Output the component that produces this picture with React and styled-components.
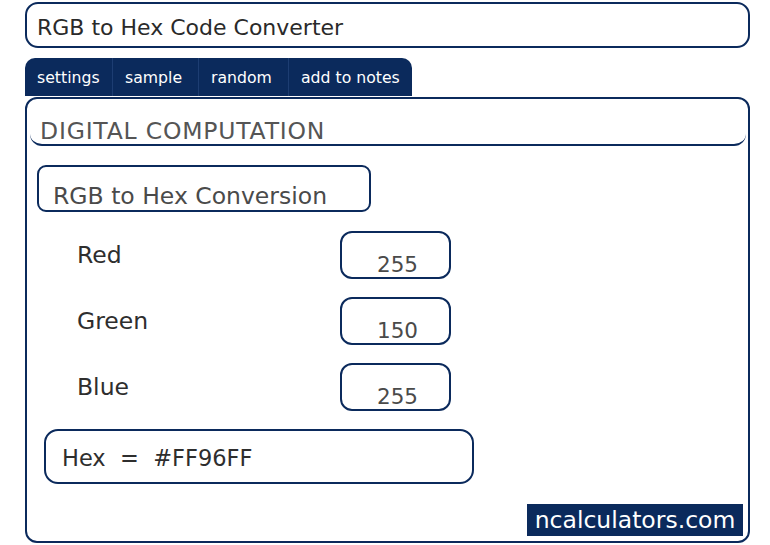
import React from "react";
import styled, { createGlobalStyle } from "styled-components";

const navy = "#0b2a5c";

const GlobalStyle = createGlobalStyle`
  html, body {
    margin: 0;
    padding: 0;
    background: #ffffff;
    font-family: "DejaVu Sans", "Open Sans", sans-serif;
  }
`;

const Page = styled.div`
  width: 770px;
  height: 545px;
  box-sizing: border-box;
  padding: 2px 20px 2px 25px;
  display: flex;
  flex-direction: column;
`;

const TitleBox = styled.div`
  height: 46px;
  box-sizing: border-box;
  border: 2px solid ${navy};
  border-radius: 13px;
  display: flex;
  align-items: center;
  padding: 4px 0 0 10px;
  font-size: 22px;
  color: #2a2a2a;
`;

const TabBar = styled.div`
  margin-top: 10px;
  align-self: flex-start;
  display: flex;
  height: 38px;
  background: ${navy};
  border-radius: 10px 10px 0 0;
  overflow: hidden;
`;

const Tab = styled.div`
  width: ${(p) => p.w}px;
  box-sizing: border-box;
  padding-left: 12px;
  display: flex;
  align-items: center;
  color: #ffffff;
  font-size: 15.7px;
  border-left: ${(p) => (p.first ? "none" : "1px solid #1d3d72")};
`;

const Panel = styled.div`
  flex: 1;
  margin-top: 1px;
  border: 2px solid ${navy};
  border-radius: 12px;
  display: flex;
  flex-direction: column;
`;

const SectionHead = styled.div`
  margin: 0 2px 0 3px;
  height: 47px;
  box-sizing: border-box;
  border-bottom: 2px solid ${navy};
  border-radius: 0 0 12px 12px;
  display: flex;
  align-items: flex-end;
  padding: 0 0 1px 10px;
  font-size: 23.5px;
  line-height: 1;
  letter-spacing: 0.8px;
  color: #555555;
`;

const SubBox = styled.div`
  margin: 19px 0 0 10px;
  width: 334px;
  height: 47px;
  box-sizing: border-box;
  border: 2px solid ${navy};
  border-radius: 9px;
  display: flex;
  align-items: flex-end;
  padding: 0 0 2px 14px;
  font-size: 23.5px;
  line-height: 1;
  color: #4a4a4a;
`;

const Rows = styled.div`
  margin: 19px 0 0 50px;
  display: flex;
  flex-direction: column;
  gap: 18px;
`;

const Row = styled.div`
  display: grid;
  grid-template-columns: 263px 111px;
  align-items: center;
`;

const Label = styled.div`
  font-size: 23.5px;
  color: #2e2e2e;
`;

const ValueBox = styled.div`
  height: 48px;
  box-sizing: border-box;
  border: 2px solid ${navy};
  border-radius: 12px;
  display: flex;
  align-items: flex-end;
  justify-content: center;
  padding: 0 0 0 4px;
  font-size: 21.5px;
  line-height: 1.1;
  color: #4a4a4a;
`;

const ResultBox = styled.div`
  margin: 18px 0 0 17px;
  width: 430px;
  height: 55px;
  box-sizing: border-box;
  border: 2px solid ${navy};
  border-radius: 14px;
  display: flex;
  align-items: center;
  padding: 2px 0 0 16px;
  font-size: 22.5px;
  color: #2e2e2e;
  white-space: pre;
`;

const Logo = styled.div`
  margin: auto 5px 5px auto;
  width: 216px;
  height: 32px;
  background: ${navy};
  color: #ffffff;
  display: flex;
  align-items: center;
  justify-content: center;
  font-size: 23.5px;
`;

const tabs = [
  { name: "settings", w: 87 },
  { name: "sample", w: 86 },
  { name: "random", w: 90 },
  { name: "add to notes", w: 124 },
];

const values = [
  { label: "Red", value: 255 },
  { label: "Green", value: 150 },
  { label: "Blue", value: 255 },
];

const toHex = (n) => n.toString(16).toUpperCase().padStart(2, "0");

export default function App() {
  const hex = "#" + values.map((v) => toHex(v.value)).join("");
  return (
    <>
      <GlobalStyle />
      <Page>
        <TitleBox>RGB to Hex Code Converter</TitleBox>
        <TabBar>
          {tabs.map((t, i) => (
            <Tab key={t.name} w={t.w} first={i === 0}>
              {t.name}
            </Tab>
          ))}
        </TabBar>
        <Panel>
          <SectionHead>DIGITAL COMPUTATION</SectionHead>
          <SubBox>RGB to Hex Conversion</SubBox>
          <Rows>
            {values.map((v) => (
              <Row key={v.label}>
                <Label>{v.label}</Label>
                <ValueBox>{v.value}</ValueBox>
              </Row>
            ))}
          </Rows>
          <ResultBox>{"Hex  =  " + hex}</ResultBox>
          <Logo>ncalculators.com</Logo>
        </Panel>
      </Page>
    </>
  );
}
